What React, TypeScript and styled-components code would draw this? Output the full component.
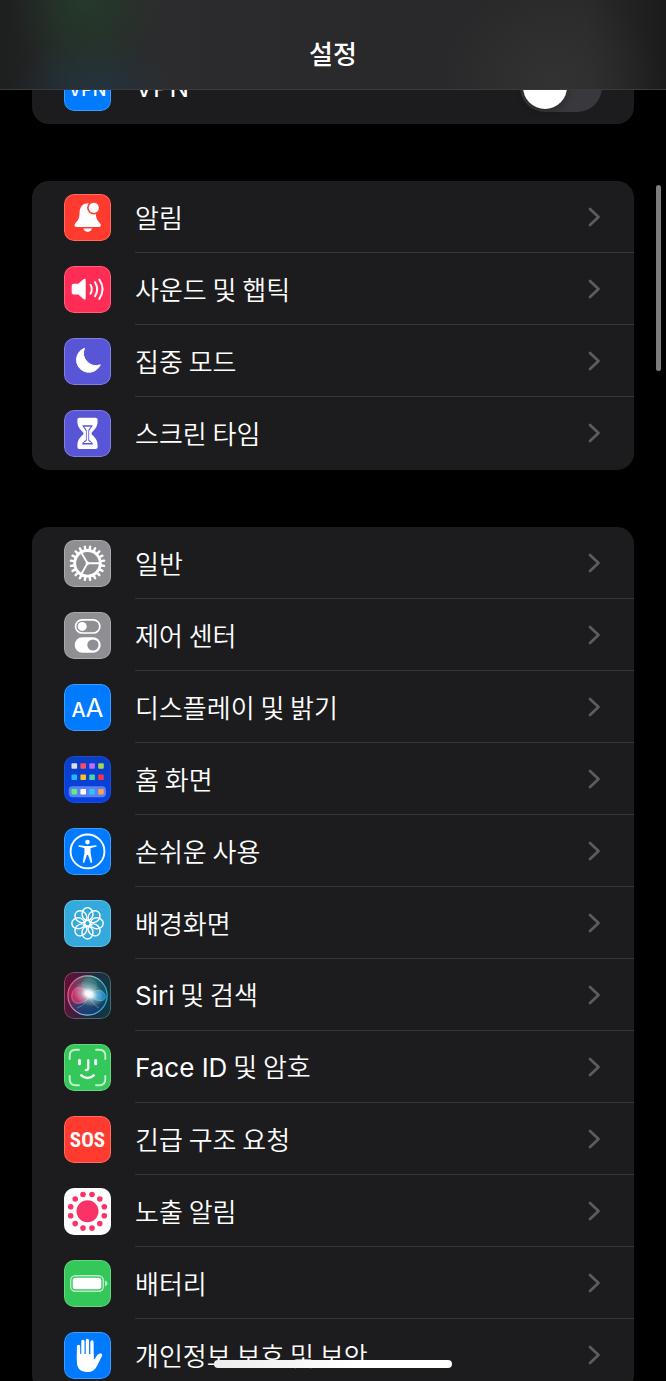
import React from "react";
import styled, { createGlobalStyle } from "styled-components";

const GlobalStyle = createGlobalStyle`
  * { box-sizing: border-box; }
  html, body { margin: 0; background: #000; }
  body {
    color: #fff;
    font-family: "Noto Sans CJK KR", sans-serif;
    font-size: 26px;
  }
`;

const Screen = styled.div`
  position: relative;
  height: 100vh;
  overflow: hidden;
  background: #000;
`;

const Header = styled.header`
  position: absolute;
  top: 0;
  left: 0;
  right: 0;
  z-index: 2;
  display: flex;
  align-items: center;
  justify-content: center;
  height: 90px;
  padding-top: 16px;
  border-bottom: 1px solid #3b3b3d;
  background:
    radial-gradient(ellipse 76px 90px at 13% 0%, rgba(36, 62, 42, 0.8), rgba(36, 62, 42, 0)),
    radial-gradient(ellipse 80px 56px at 14% 100%, rgba(34, 54, 68, 0.8), rgba(34, 54, 68, 0)),
    radial-gradient(ellipse 110px 90px at 83% 90%, rgba(54, 54, 54, 0.7), rgba(54, 54, 54, 0)),
    linear-gradient(90deg, #1d1e1e 0%, #252727 9%, #2c2c2e 24%, #29292b 60%, #2a2a2b 88%, #1b1b1b 100%);
`;

const Title = styled.h1`
  margin: 0;
  font-size: 26px;
  line-height: 36px;
  font-weight: 500;
`;

const Main = styled.main`
  display: flex;
  flex-direction: column;
  gap: 57px;
  padding: 51px 32px 0;
`;

const Group = styled.ul`
  flex: none;
  margin: 0;
  padding: 0 0 1px;
  list-style: none;
  border-radius: 17px;
  background: #1c1c1e;
  overflow: hidden;
`;

const Item = styled.li`
  display: flex;
`;

const rowLayout = `
  flex: 1;
  display: flex;
  align-items: center;
  gap: 24px;
  height: 72px;
  padding-left: 32px;
  color: inherit;
  text-decoration: none;
`;

const LinkRow = styled.a`${rowLayout}`;
const SwitchRow = styled.label`${rowLayout}`;

const RowBody = styled.span<{ $divided: boolean }>`
  flex: 1;
  display: flex;
  align-items: center;
  justify-content: space-between;
  align-self: stretch;
  padding-right: 32px;
  border-bottom: 1px solid ${(p) => (p.$divided ? "#38383a" : "transparent")};
`;

const Label = styled.span`
  line-height: 36px;
  font-weight: 350;
  white-space: nowrap;
`;

const Latin = styled.span`
  font-family: Inter, sans-serif;
  font-weight: 400;
`;

const Tile = styled.span<{ $bg: string; $rim: number }>`
  position: relative;
  flex: none;
  display: block;
  width: 47px;
  height: 47px;
  border-radius: 10px;
  overflow: hidden;
  background: ${(p) => p.$bg};

  &::after {
    content: "";
    position: absolute;
    inset: 0;
    border: 1px solid rgba(255, 255, 255, ${(p) => p.$rim});
    border-radius: 10px;
  }

  svg { display: block; }
`;

const Switch = styled.input`
  appearance: none;
  flex: none;
  width: 82px;
  height: 50px;
  margin: 0;
  padding: 3px;
  border-radius: 25px;
  background: #39393d;

  &::before {
    content: "";
    display: block;
    width: 44px;
    height: 44px;
    border-radius: 50%;
    background: #fff;
    box-shadow: 0 2px 8px rgba(0, 0, 0, 0.3);
  }

  &:checked { background: #34c759; }
  &:checked::before { margin-left: auto; }
`;

const Chevron = styled.svg`
  flex: none;
  margin-right: 1px;
`;

const ScrollThumb = styled.div`
  position: absolute;
  top: 185px;
  right: 5px;
  width: 5px;
  height: 186px;
  border-radius: 3px;
  background: #7d7d7d;
`;

const HomeIndicator = styled.div`
  position: absolute;
  bottom: 13px;
  left: 50%;
  z-index: 3;
  width: 238px;
  height: 8px;
  margin-left: -119px;
  border-radius: 4px;
  background: linear-gradient(90deg, #ececec, #fff 60%);
`;

const Art = ({ children }: { children: React.ReactNode }) => (
  <svg width="47" height="47" viewBox="0 0 47 47" fill="none" aria-hidden="true">
    {children}
  </svg>
);

const ring = (count: number, start = 0) =>
  Array.from({ length: count }, (_, i) => start + (i * 360) / count);

const polar = (deg: number, r: number) => ({
  x: 23.5 + r * Math.cos((deg * Math.PI) / 180),
  y: 23.3 + r * Math.sin((deg * Math.PI) / 180),
});

const VpnArt = () => (
  <Art>
    <text x="23.5" y="32" textAnchor="middle" fill="#fff" fontFamily="Inter, sans-serif" fontSize="18" fontWeight="500">VPN</text>
  </Art>
);

const BellArt = () => (
  <Art>
    <path fill="#fff" d="M24 9.2c-5.6 0-8.2 4-8.4 9.1-.2 5.5-1.1 7.4-3.6 10.2-1 1.1-1.5 1.9-1.5 2.8 0 1.1.9 1.8 2.3 1.8h21.7c1.4 0 2.3-.7 2.3-1.8 0-.9-.5-1.7-1.5-2.8-2.500-2.800-3.300-4.700-3.600-10.200C31.400 13.200 29 9.200 24 9.200Z" />
    <path fill="#fff" d="M19.3 34.6h8.7c-.6 2-2.2 3.3-4.3 3.3s-3.8-1.3-4.4-3.3Z" />
    <circle cx="29.8" cy="13.8" r="5.9" fill="#fff" stroke="#ff3b30" strokeWidth="1.6" />
  </Art>
);

const SoundArt = () => (
  <Art>
    <path fill="#fff" d="M9.700 17.800h4.600l5.100-4.600c1.200-1 2.300-.6 2.300.8v18.300c0 1.400-1.200 1.700-2.300.7l-5.100-4.500H9.700c-1.300 0-2-.7-2-2v-6.700c0-1.300.7-2 2-2Z" />
    <g stroke="#fff" strokeWidth="2" strokeLinecap="round">
      <path d="M26.5 18.8q2.6 4.4 0 8.9" />
      <path d="M31 16.2q4.400 7 0 14" />
      <path d="M35.300 13.500q6.600 9.700 0 19.400" />
    </g>
  </Art>
);

const MoonArt = () => (
  <Art>
    <path fill="#fff" stroke="#fff" strokeWidth="1" strokeLinejoin="round" d="M20.400 10.300A12.400 12.400 0 1 0 36.300 26.800 12.600 12.600 0 0 1 20.400 10.300Z" />
  </Art>
);

const HourglassArt = () => (
  <Art>
    <path fill="#fff" d="M15.500 7.800h16c1.300 0 2.100.8 2.100 2v1.400c0 5.500-2.200 7.600-6 11.500v1.600c3.800 3.600 6 6 6 11.200v1.400c0 1.200-.8 2-2.100 2h-16c-1.300 0-2.100-.8-2.100-2v-1.400c0-5.200 2.200-7.600 6-11.200v-1.600c-3.800-3.900-6-6-6-11.500V9.800c0-1.200.8-2 2.100-2Z" />
    <path fill="#5856d6" d="M18.200 15.300h10.600c-.8 2.300-3 3.800-3.700 6v8.200c.5 1.300 2.700 1.900 4.200 5H17.700c1.500-3.100 3.700-3.700 4.200-5v-8.200c-.7-2.200-2.900-3.700-3.700-6Z" />
    <path fill="#fff" d="M20.300 16.800h6.400c-.9 1.300-2 2.300-2.400 3.800v9.900c.7 1.300 2 1.400 3 2.400h-7.600c1-1 2.300-1.100 3-2.400v-9.900c-.4-1.500-1.500-2.500-2.400-3.800Z" />
  </Art>
);

const GearArt = () => (
  <Art>
    <circle cx="23.5" cy="23.3" r="12.8" stroke="#fff" strokeWidth="2.9" />
    <g stroke="#fff" strokeWidth="2.4" strokeLinecap="round">
      {ring(20, 9).map((deg) => {
        const a = polar(deg, 14);
        const b = polar(deg, 16.8);
        return <line key={deg} x1={a.x} y1={a.y} x2={b.x} y2={b.y} />;
      })}
    </g>
    <g stroke="#fff" strokeWidth="1.9">
      {ring(3).map((deg) => {
        const b = polar(deg, 12);
        return <line key={deg} x1="23.5" y1="23.3" x2={b.x} y2={b.y} />;
      })}
    </g>
    <circle cx="23.5" cy="23.3" r="1.7" fill="#fff" />
  </Art>
);

const ControlArt = () => (
  <Art>
    <rect x="11.6" y="7.8" width="24.2" height="13.2" rx="6.6" stroke="#fff" strokeWidth="1.7" />
    <circle cx="18.2" cy="14.4" r="4.5" fill="#fff" />
    <rect x="10.7" y="25.3" width="26" height="15.4" rx="7.7" fill="#fff" />
    <circle cx="28.9" cy="33" r="5.6" fill="#8e8e93" />
  </Art>
);

const TextSizeArt = () => (
  <Art>
    <g fill="#fff" fontFamily="Inter, sans-serif">
      <text x="14.5" y="33.3" textAnchor="middle" fontSize="20" fontWeight="500">A</text>
      <text x="30.5" y="33.3" textAnchor="middle" fontSize="26" fontWeight="400">A</text>
    </g>
  </Art>
);

const homeApps = [
  { y: 10, colors: ["#d9dde0", "#ff4a68", "#bd6bff", "#a8d64b"] },
  { y: 21.2, colors: ["#25b8ff", "#ffbf1f", "#46d6a8", "#f5363f"] },
  { y: 35.7, colors: ["#62ee7d", "#ffffff", "#2cc4ff", "#ff9f4f"] },
];

const HomeArt = () => (
  <Art>
    <rect x="4.7" y="30.2" width="37.3" height="11" rx="4" fill="#5b82f0" />
    {homeApps.map(({ y, colors }) =>
      colors.map((c, i) => (
        <rect key={c} x={7.5 + i * 8.9} y={y - 2.8} width="5.6" height="5.6" rx="1" fill={c} />
      ))
    )}
  </Art>
);

const AccessArt = () => (
  <Art>
    <circle cx="23.5" cy="23.4" r="16.9" stroke="#fff" strokeWidth="1.9" />
    <circle cx="23.5" cy="14.1" r="2.3" fill="#fff" />
    <path fill="#fff" d="M15.200 17.200l6.200.7h4.200l6.200-.7c1 0 1.200 1.400.2 1.600l-5.400 1.200v5.100l1.600 8.700c.1 1.200-1.400 1.400-1.700.4L24.100 27h-1.200l-2.400 7.200c-.3 1-1.800.8-1.700-.4l1.600-8.700V20L15 18.800c-1-.2-.8-1.600.2-1.600Z" />
  </Art>
);

const FlowerArt = () => (
  <Art>
    <g stroke="#fff" strokeWidth="1.4">
      {ring(8).map((deg) => {
        const c = polar(deg, 9.3);
        return <ellipse key={deg} cx={c.x} cy={c.y} rx="6.4" ry="5.5" transform={`rotate(${deg} ${c.x} ${c.y})`} />;
      })}
      <circle cx="23.5" cy="23.3" r="2.9" />
    </g>
  </Art>
);

const SiriArt = () => (
  <Art>
    <defs>
      <linearGradient id="siriRim" x1="4" y1="20" x2="43" y2="27" gradientUnits="userSpaceOnUse">
        <stop stopColor="#e8527e" />
        <stop offset=".5" stopColor="#86d4c0" />
        <stop offset="1" stopColor="#2a9fd0" />
      </linearGradient>
      <linearGradient id="siriOrb" x1="4" y1="22" x2="43" y2="26" gradientUnits="userSpaceOnUse">
        <stop stopColor="#a01c52" />
        <stop offset=".5" stopColor="#3e6874" />
        <stop offset="1" stopColor="#064f5c" />
      </linearGradient>
      <radialGradient id="siriGlow">
        <stop stopColor="#fff" />
        <stop offset=".25" stopColor="#fff" stopOpacity=".9" />
        <stop offset=".55" stopColor="#cdf0f0" stopOpacity=".42" />
        <stop offset="1" stopColor="#fff" stopOpacity="0" />
      </radialGradient>
      <linearGradient id="siriBase" x1="0" y1="0" x2="0" y2="1">
        <stop offset=".5" stopColor="#14285e" stopOpacity="0" />
        <stop offset="1" stopColor="#14387e" />
      </linearGradient>
    </defs>
    <circle cx="23.5" cy="23.5" r="19.6" fill="url(#siriOrb)" />
    <circle cx="23.5" cy="23.5" r="19.6" fill="url(#siriBase)" />
    <path fill="#e73575" fillOpacity=".65" stroke="#ff7a9e" strokeWidth=".6" d="M27 24c-5-9-17-12-19-2-2 11 9 13 19 2Z" />
    <path fill="#1d8fe0" fillOpacity=".75" stroke="#58c9ef" strokeWidth=".6" d="M24 23c6-5 15-7 17 0s-7 8-17 0Z" />
    <path fill="#6ed8c0" fillOpacity=".2" d="M25 24C16 18 14 9 24 6c12 1 12 11 1 18Z" />
    <path stroke="#7d9dea" strokeOpacity=".6" strokeWidth="1" d="M25 23c-2 7-6 11-12 13M25 23c2 6 5 10 10 13" />
    <circle cx="23.5" cy="23.5" r="19.6" stroke="url(#siriRim)" strokeWidth="1.3" />
    <ellipse cx="25" cy="22" rx="16" ry="12" fill="url(#siriGlow)" transform="rotate(24 25 22)" />
  </Art>
);

const FaceArt = () => (
  <Art>
    <g stroke="#fff" strokeLinecap="round">
      <path strokeOpacity=".72" strokeWidth="1.9" d="M5.700 15v-3.300c0-4 2-6 6-6H15M32 5.700h3.300c4 0 6 2 6 6V15M41.300 32v3.300c0 4-2 6-6 6H32M15 41.300h-3.300c-4 0-6-2-6-6V32" />
      <path strokeWidth="2.9" d="M15.500 16.500v3.400M31.700 16.500v3.400" />
      <path strokeWidth="2.2" d="M24.300 16v7.800c0 1.700-.8 2.400-2.600 2.400" />
      <path strokeWidth="2.4" d="M17.300 31.300c3.700 3.500 8.800 3.500 12.400 0" />
    </g>
  </Art>
);

const SosArt = () => (
  <Art>
    <text x="23.5" y="31" textAnchor="middle" fill="#fff" fontFamily='"Liberation Sans Narrow", "Roboto Condensed", Roboto, sans-serif' fontSize="21" fontWeight="700">SOS</text>
  </Art>
);

const ExposureArt = () => (
  <Art>
    <g fill="#fb3268">
      <circle cx="23.5" cy="23.3" r="11" />
      {ring(12, 15).map((deg) => {
        const c = polar(deg, 17.4);
        return <circle key={deg} cx={c.x} cy={c.y} r="2.8" />;
      })}
    </g>
  </Art>
);

const BatteryArt = () => (
  <Art>
    <rect x="6.7" y="15.7" width="32.6" height="15.6" rx="4.5" stroke="#fff" strokeOpacity=".65" strokeWidth="1.4" />
    <rect x="8.7" y="17.8" width="28.6" height="11.4" rx="2.5" fill="#fff" />
    <path fill="#fff" fillOpacity=".7" d="M41 20.500q2.500 1 2.500 3t-2.500 3Z" />
  </Art>
);

const HandArt = () => (
  <Art>
    <path stroke="#fff" strokeWidth="3.3" strokeLinecap="round" d="M14.500 14.500V27M18.900 9.500V25M23.400 8.300V25M28 10V26" />
    <path fill="#fff" d="M12.850 22H29.650v5.600c.9-.2 1.900-1.700 3-3.600 1.300-2.200 2.800-3 4.500-2.400 1.100.4 1.400 1.300.8 2.500l-4.700 9.300C31 37.800 28 40 23.200 40c-7 0-10.350-4-10.350-10.500Z" />
  </Art>
);

type Entry = { label: string; latin?: string; bg: string; rim?: number; art: React.ReactNode };

const alerts: Entry[] = [
  { label: "알림", bg: "#ff3b30", art: <BellArt /> },
  { label: "사운드 및 햅틱", bg: "#ff2d55", art: <SoundArt /> },
  { label: "집중 모드", bg: "#5856d6", art: <MoonArt /> },
  { label: "스크린 타임", bg: "#5856d6", art: <HourglassArt /> },
];

const general: Entry[] = [
  { label: "일반", bg: "#8e8e93", art: <GearArt /> },
  { label: "제어 센터", bg: "#8e8e93", art: <ControlArt /> },
  { label: "디스플레이 및 밝기", bg: "#007aff", art: <TextSizeArt /> },
  { label: "홈 화면", bg: "linear-gradient(#0a3fc4, #0741e6)", rim: 0.08, art: <HomeArt /> },
  { label: "손쉬운 사용", bg: "#007aff", art: <AccessArt /> },
  { label: "배경화면", bg: "#34aadc", art: <FlowerArt /> },
  { latin: "Siri", label: " 및 검색", bg: "linear-gradient(100deg, #6d0c35, #27263f 50%, #093d45)", art: <SiriArt /> },
  { latin: "Face ID", label: " 및 암호", bg: "#34c759", art: <FaceArt /> },
  { label: "긴급 구조 요청", bg: "#ff3b30", art: <SosArt /> },
  { label: "노출 알림", bg: "#fff", art: <ExposureArt /> },
  { label: "배터리", bg: "#34c759", art: <BatteryArt /> },
  { label: "개인정보 보호 및 보안", bg: "#007aff", art: <HandArt /> },
];

const SettingsGroup = ({ entries }: { entries: Entry[] }) => (
  <Group>
    {entries.map(({ label, latin, bg, rim = 0.25, art }, i) => (
      <Item key={label}>
        <LinkRow href="#">
          <Tile $bg={bg} $rim={rim}>{art}</Tile>
          <RowBody $divided={i < entries.length - 1}>
            <Label>
              {latin && <Latin>{latin}</Latin>}
              {label}
            </Label>
            <Chevron width="13" height="20" viewBox="0 0 13 20" fill="none" aria-hidden="true">
              <path d="M2 2l8.500 8-8.500 8" stroke="#5d5d61" strokeWidth="2.7" strokeLinecap="round" strokeLinejoin="round" />
            </Chevron>
          </RowBody>
        </LinkRow>
      </Item>
    ))}
  </Group>
);

export default function App() {
  return (
    <Screen>
      <GlobalStyle />
      <Header>
        <Title>설정</Title>
      </Header>
      <Main>
        <Group>
          <Item>
            <SwitchRow>
              <Tile $bg="#007aff" $rim={0.25}><VpnArt /></Tile>
              <RowBody $divided={false}>
                <Label><Latin>VPN</Latin></Label>
                <Switch type="checkbox" role="switch" />
              </RowBody>
            </SwitchRow>
          </Item>
        </Group>
        <SettingsGroup entries={alerts} />
        <SettingsGroup entries={general} />
      </Main>
      <ScrollThumb />
      <HomeIndicator />
    </Screen>
  );
}
